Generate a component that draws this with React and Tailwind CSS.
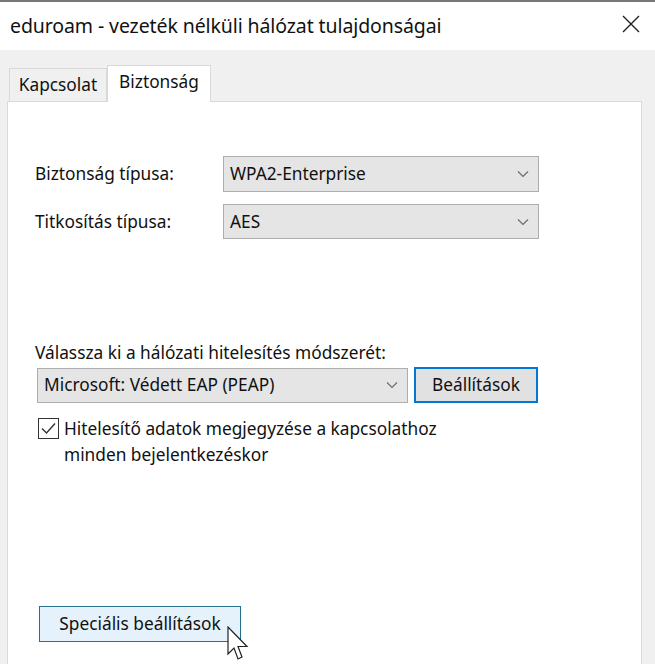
import React from "react";

const font = { fontFamily: '"Noto Sans", "Open Sans", sans-serif' };

const Chevron = () => (
  <svg width="12" height="8" viewBox="0 0 12 8" className="shrink-0">
    <path d="M1 1.5 L6 6.5 L11 1.5" fill="none" stroke="#6d6d6d" strokeWidth="1.2" />
  </svg>
);

const Select = ({ value, className }) => (
  <div
    className={`flex items-center justify-between bg-[#e5e5e5] border border-[#adadad] pl-[6px] pr-[9px] text-[17.3px] text-[#111] ${className}`}
  >
    <span>{value}</span>
    <Chevron />
  </div>
);

export default function App() {
  return (
    <div
      className="relative w-[655px] h-[664px] flex flex-col bg-[#f0f0f0] border-t-2 border-[#777] overflow-hidden"
      style={font}
    >
      {/* Title bar */}
      <div className="h-[48px] bg-white flex items-center justify-between pl-[10px] pr-[15px]">
        <span className="text-[19.5px] text-[#111] tracking-[-0.1px]">
          eduroam - vezeték nélküli hálózat tulajdonságai
        </span>
        <svg width="18" height="18" viewBox="0 0 18 18" className="-mt-[4px]">
          <path d="M1 1 L17 17 M17 1 L1 17" stroke="#222" strokeWidth="1.4" />
        </svg>
      </div>

      {/* Body */}
      <div className="flex-1 flex flex-col pl-[7px] pr-[13px] pt-[15px]">
        {/* Tabs */}
        <div className="flex items-end pl-[2px] relative z-10">
          <div className="w-[98px] h-[33px] flex items-center justify-center bg-[#f0f0f0] border border-b-0 border-[#d9d9d9] text-[17.3px] text-[#111]">
            Kapcsolat
          </div>
          <div className="w-[104px] h-[37px] -mb-px flex items-start justify-center pt-[3px] bg-white border border-b-0 border-[#d9d9d9] text-[17.3px] text-[#111]">
            Biztonság
          </div>
        </div>

        {/* Panel */}
        <div className="flex-1 -mb-[4px] flex flex-col bg-white border border-[#d9d9d9] pl-[27px] pt-[54px] text-[17.3px] text-[#111]">
          <div className="flex items-center">
            <span className="w-[188px]">Biztonság típusa:</span>
            <Select value="WPA2-Enterprise" className="w-[316px] h-[36px]" />
          </div>
          <div className="flex items-center mt-[12px]">
            <span className="w-[188px]">Titkosítás típusa:</span>
            <Select value="AES" className="w-[316px] h-[35px]" />
          </div>

          <div className="mt-[102px] mb-[2px] leading-[24px]">
            Válassza ki a hálózati hitelesítés módszerét:
          </div>
          <div className="flex items-center">
            <Select value="Microsoft: Védett EAP (PEAP)" className="w-[371px] h-[35px] ml-[2px]" />
            <button className="ml-[6px] w-[124px] h-[36px] bg-[#e1e1e1] border-2 border-[#0078d7] text-[17.3px] text-[#111]">
              Beállítások
            </button>
          </div>

          <div className="flex items-start mt-[14px] ml-[3px]">
            <div className="w-[21px] h-[21px] mt-[1px] border border-[#333] bg-white flex items-center justify-center shrink-0">
              <svg width="17" height="15" viewBox="0 0 17 15">
                <path d="M2 7.5 L6.5 12 L15 2.5" fill="none" stroke="#333" strokeWidth="1.4" />
              </svg>
            </div>
            <div className="ml-[5px] leading-[26px] -mt-[1px]">
              Hitelesítő adatok megjegyzése a kapcsolathoz
              <br />
              minden bejelentkezéskor
            </div>
          </div>

          <div className="flex-1" />
          <div className="mb-[25px] ml-[4px]">
            <button className="w-[202px] h-[36px] bg-[#e5f1fb] border border-[#2b6f8f] text-[17.3px] text-[#111]">
              Speciális beállítások
            </button>
          </div>
        </div>
      </div>

      {/* Mouse cursor */}
      <svg
        className="absolute left-[227px] top-[624px]"
        width="24"
        height="42"
        viewBox="0 0 24 42"
      >
        <path
          d="M1 1 L1 28 L7 22 L11 33 L15 31 L11 20.5 L20 20.5 Z"
          fill="#fff"
          stroke="#222"
          strokeWidth="1.2"
          strokeLinejoin="miter"
        />
      </svg>
    </div>
  );
}
